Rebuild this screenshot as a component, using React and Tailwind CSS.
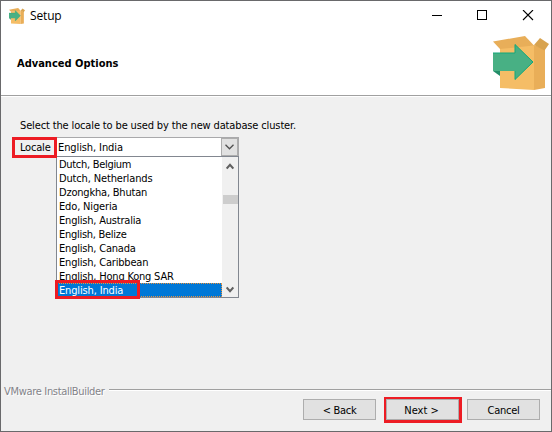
import React from "react";

const locales = [
  ["Dutch, Belgium", "tracking-[-0.3px]"],
  ["Dutch, Netherlands", "tracking-[-0.15px]"],
  ["Dzongkha, Bhutan", "tracking-[-0.2px]"],
  ["Edo, Nigeria", "tracking-[-0.15px]"],
  ["English, Australia", "tracking-[-0.2px]"],
  ["English, Belize", "tracking-[-0.28px]"],
  ["English, Canada", "tracking-[-0.2px]"],
  ["English, Caribbean", "tracking-[-0.2px]"],
  ["English, Hong Kong SAR", "tracking-[-0.2px]"],
  ["English, India", "tracking-[-0.15px]"],
];

function BoxIcon({ className }) {
  return (
    <svg className={className} viewBox="0 0 56 54" preserveAspectRatio="none">
      <path d="M7 12 41 9 41 54 7 52Z" fill="#f5bd66" />
      <path d="M41 9 52 13 52 52 41 54Z" fill="#e9ae58" />
      <path d="M0 5.5 32 0 41 9.5 7 13Z" fill="#e8ae59" />
      <path d="M41 9 47 2 56 8 51.500 14.500Z" fill="#d8a34f" />
      <path d="M0 35 7 35 7 40Z" fill="#238d68" />
      <path d="M0 17H22V8.500L40 26 22 43.500V35H0Z" fill="#48b084" />
      <path d="M0 17H22V8.500L40 26 22 43.500V35" fill="none" stroke="#12a77b" />
    </svg>
  );
}

function TitleBar() {
  return (
    <div className="flex h-[29px] items-center pl-2">
      <BoxIcon className="h-4 w-4" />
      <span className="ml-[5px] font-['Open_Sans','Noto_Sans',sans-serif] text-[12px] leading-[16px] tracking-[-0.15px] [font-stretch:normal]">Setup</span>
      <svg className="ml-auto mr-[17px] h-[11px] w-[102px]" viewBox="0 0 102 11" fill="none" stroke="#000" shapeRendering="crispEdges">
        <path d="M0 5.500H10" />
        <path d="M45.500 .5H54.500V9.500H45.500Z" />
        <path d="M91 0 101 10M101 0 91 10" shapeRendering="auto" strokeWidth="1.100" />
      </svg>
    </div>
  );
}

function Button({ children, className = "" }) {
  return (
    <button className={"block h-[21px] w-[73px] border border-[#adadad] bg-[#e1e1e1] pt-[2px] text-center leading-[17px] " + className}>
      {children}
    </button>
  );
}

export default function App() {
  return (
    <div className="flex h-[432px] w-[552px] flex-col overflow-hidden border border-[#69696b] bg-[#f0f0f0] font-['DejaVu_Sans_Condensed','DejaVu_Sans',sans-serif] text-[11px] leading-[14px] text-black [font-stretch:condensed]">
      <header className="h-[96px] shrink-0 border-b border-white bg-white">
        <div className="h-[95px] border-b border-[#a0a0a0]">
          <TitleBar />
          <div className="flex justify-between pl-4 pr-[2px]">
            <h1 className="mt-[27px] font-bold">Advanced Options</h1>
            <BoxIcon className="mt-[6px] h-[54px] w-[56px]" />
          </div>
        </div>
      </header>

      <main className="h-[291px] shrink-0 pt-[21px]">
        <p className="ml-[19px] h-[19px] whitespace-nowrap pt-px tracking-[-0.14px]">Select the locale to be used by the new database cluster.</p>
        <div className="flex pl-[11px]">
          <label className="relative z-10 h-[21px] w-[45px] shrink-0 border-[3px] border-[#ed1c24] pl-[5px] leading-[15px] tracking-[-0.2px]">Locale</label>
          <div className="-ml-px w-[183px]">
            <div className="flex h-[19px] border border-b-0 border-[#a9a9ab] bg-white">
              <span className="flex-1 pl-px leading-[19px] tracking-[-0.1px]">English, India</span>
              <span className="flex w-[17px] items-center justify-center border border-[#adadad] bg-[#e1e1e1]">
                <svg className="h-[6px] w-[9px]" viewBox="0 0 9 6" fill="none" stroke="#505050" strokeWidth="1.300"><path d="M.5 .8 4.500 4.800 8.500 .8" /></svg>
              </span>
            </div>
            <div className="flex h-[142px] border border-[#828790] bg-white">
              <ul className="flex-1">
                {locales.map(([name, spacing], i) => (
                  <li key={name} className={"relative h-[14px] whitespace-nowrap pl-[2px] pt-px " + spacing + (i === 9 ? " bg-[#0078d7] text-white outline-1 -outline-offset-1 outline-dotted outline-[#e8913c]" : "")}>
                    {name}
                    {i === 9 && <span className="absolute -left-[2px] -top-[3px] h-[19px] w-[85px] border-[3px] border-[#ed1c24]" />}
                  </li>
                ))}
              </ul>
              <div className="flex w-4 flex-col items-center bg-[#f0f0f0]">
                <svg className="mt-[6px] h-[7px] w-[8px]" viewBox="0 0 8 7" fill="none" stroke="#606060" strokeWidth="2"><path d="M.7 5.500 4 1.800 7.300 5.500" /></svg>
                <span className="mt-[25px] h-[9px] w-[15px] bg-[#cdcdcd]" />
                <svg className="mb-[4px] mt-auto h-[7px] w-[8px]" viewBox="0 0 8 7" fill="none" stroke="#606060" strokeWidth="2"><path d="M.7 1.500 4 5.200 7.300 1.500" /></svg>
              </div>
            </div>
          </div>
        </div>
      </main>

      <footer>
        <div className="-mt-[3px] flex h-[13px] items-start pl-[3px] text-[#838389]">
          <span className="whitespace-nowrap tracking-[-0.32px] [text-shadow:1px_1px_0_#fff]">VMware InstallBuilder</span>
          <span className="ml-[4px] mt-[4px] h-[2px] flex-1 border-b border-t border-b-white border-t-[#a0a0a0]" />
        </div>
        <div className="-mt-px flex h-[26px] items-start pl-[302px]">
          <Button className="mt-[2px] tracking-[-0.3px]">&lt; Back</Button>
          <span className="relative ml-2 h-[26px] w-[78px] border-[3px] border-[#ed1c24]">
            <Button className="-ml-px -mt-px pr-[2px]">Next &gt;</Button>
          </span>
          <Button className="ml-[5px] mt-[2px] tracking-[-0.25px]">Cancel</Button>
        </div>
      </footer>
    </div>
  );
}
